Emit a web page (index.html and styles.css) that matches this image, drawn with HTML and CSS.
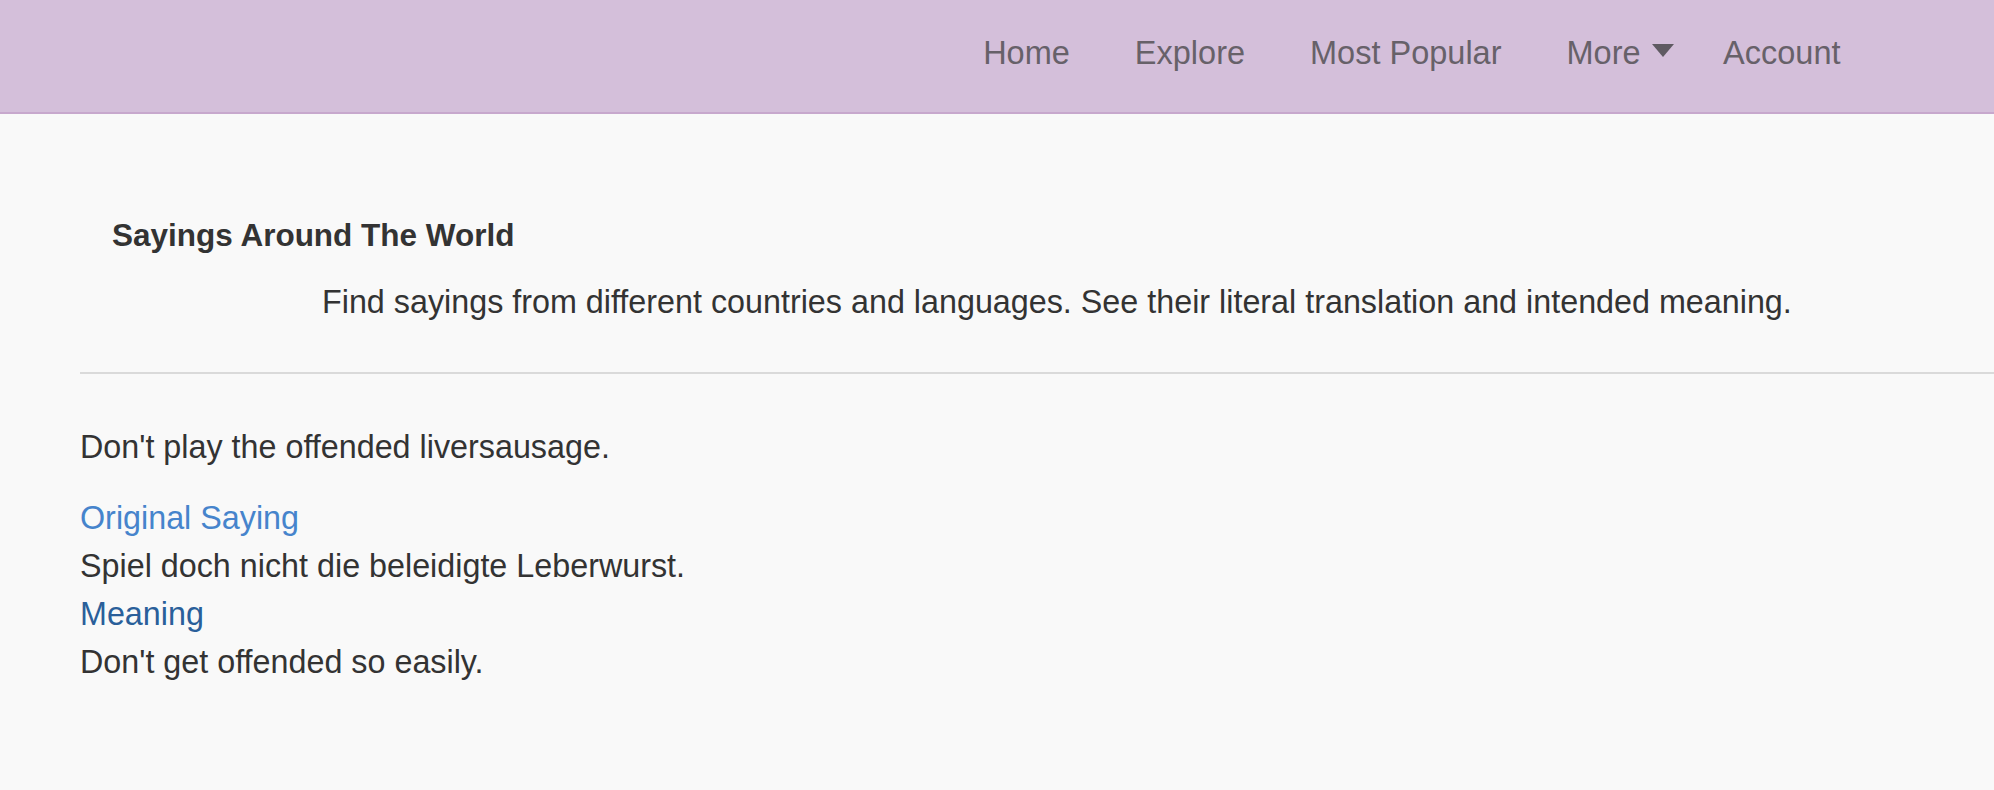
FILE: index.html
```html
<!DOCTYPE html>
<html lang="en">
<head>
<meta charset="utf-8">
<title>Sayings Around The World</title>
<link rel="stylesheet" href="styles.css">
</head>
<body>
<header class="navbar">
  <nav class="nav-links">
    <a class="nav-link" href="#">Home</a>
    <a class="nav-link" href="#">Explore</a>
    <a class="nav-link" href="#">Most Popular</a>
    <a class="nav-link dropdown" href="#">More<span class="caret"></span></a>
    <a class="nav-link" href="#">Account</a>
  </nav>
</header>
<main class="page">
  <section class="intro">
    <h1 class="title">Sayings Around The World</h1>
    <p class="lead">Find sayings from different countries and languages. See their literal translation and intended meaning.</p>
  </section>
  <hr class="rule">
  <article class="saying">
    <p class="literal">Don't play the offended liversausage.</p>
    <div class="label label-original">Original Saying</div>
    <div class="text">Spiel doch nicht die beleidigte Leberwurst.</div>
    <div class="label label-meaning">Meaning</div>
    <div class="text">Don't get offended so easily.</div>
  </article>
</main>
</body>
</html>
```

FILE: styles.css
```css
html, body {
  margin: 0;
  padding: 0;
}

body {
  background: #f9f9f9;
  color: #333333;
  font-family: "Liberation Sans", Arial, Helvetica, sans-serif;
  font-size: 32.3px;
  line-height: 48px;
  overflow: hidden;
}

.navbar {
  background: #d4bfda;
  border-bottom: 2px solid #c7a8cd;
  height: 112px;
}

.nav-links {
  display: flex;
  justify-content: flex-end;
  padding-right: 121px;
}

.nav-link {
  display: block;
  padding: 31px 32.5px 36px;
  font-size: 32.5px;
  line-height: 45px;
  color: #676169;
  text-decoration: none;
  white-space: nowrap;
}

.nav-link.dropdown {
  padding-right: 17px;
}

.caret {
  display: inline-block;
  width: 0;
  height: 0;
  margin-left: 11px;
  vertical-align: 7px;
  border-left: 11px solid transparent;
  border-right: 11px solid transparent;
  border-top: 13px solid #5f5a62;
}

.page {
  padding-left: 80px;
}

.intro {
  padding-top: 99px;
  padding-left: 32px;
}

.title {
  margin: 0;
  font-size: 31.5px;
  font-weight: bold;
  line-height: 45px;
  color: #333333;
}

.lead {
  margin: 22px 0 0;
  padding-left: 210px;
  line-height: 45px;
  white-space: nowrap;
}

.rule {
  margin: 47px 0 49px;
  border: 0;
  border-top: 2px solid #dadada;
  height: 0;
}

.saying .literal {
  margin: 0 0 23px;
}

.label-original {
  color: #4684cc;
}

.label-meaning {
  color: #2a5f9a;
}
```
